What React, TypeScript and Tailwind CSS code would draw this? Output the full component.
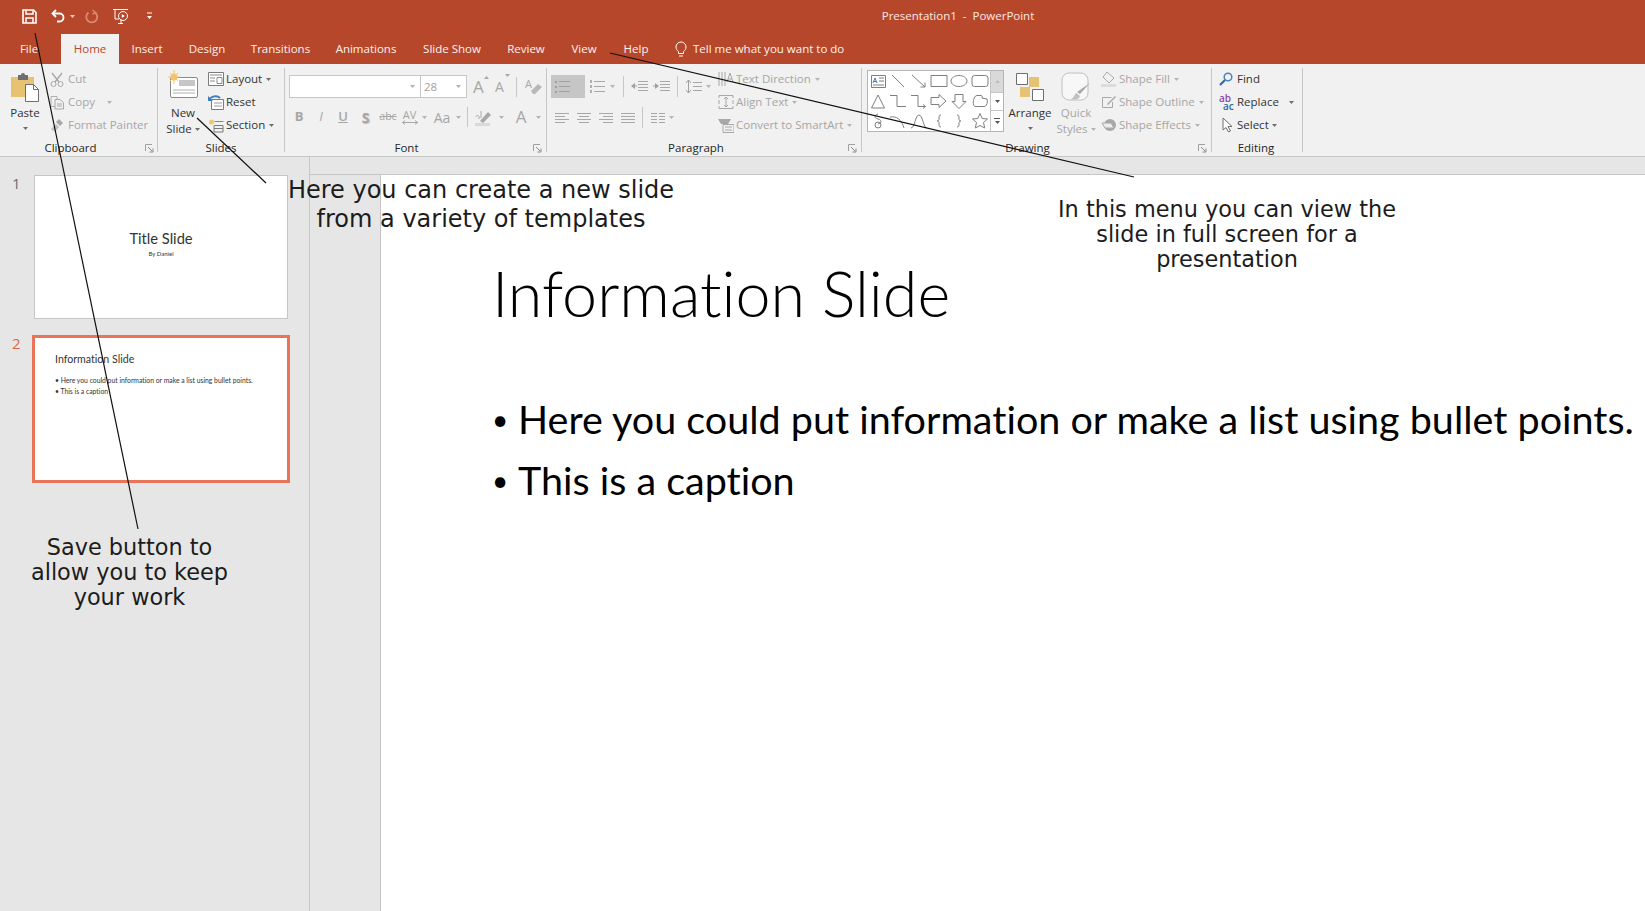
import React from "react";

const UI = "font-['Open_Sans','Noto_Sans',sans-serif]";

function Caret({ c = "#7a7a7a", className = "" }: { c?: string; className?: string }) {
  return (
    <svg width="5" height="3" viewBox="0 0 5 3" className={"shrink-0 " + className}>
      <path d="M0 0h5L2.500 3z" fill={c} />
    </svg>
  );
}

function Sep({ className = "" }: { className?: string }) {
  return <div className={"w-px bg-[#c6c6c6] shrink-0 " + className} />;
}

function Launcher({ className = "" }: { className?: string }) {
  return (
    <svg width="9" height="9" viewBox="0 0 9 9" fill="none" className={"absolute top-[4px] " + className}>
      <path d="M.5 7V.5H7" stroke="#a0a0a0" />
      <path d="M3 3l4 4M8 4.500V8H4.500" stroke="#8a8a8a" />
    </svg>
  );
}

function Group({ label, className, labelClass = "justify-center", children, launcher }: any) {
  return (
    <div className={"shrink-0 flex flex-col relative " + className}>
      <div className="h-[72px] flex">{children}</div>
      <div className={"h-[16px] flex text-[11.5px] leading-[16px] text-[#262626] relative " + labelClass}>
        {label}
        {launcher}
      </div>
    </div>
  );
}

function Row({ icon, label, caret, dim, caretClass = "ml-[4px]" }: any) {
  return (
    <div className={"h-[22px] mb-px flex items-center text-[11.5px] whitespace-nowrap " + (dim ? "text-[#a6a6a6]" : "text-[#333333]")}>
      <div className="w-[18px] h-[18px] shrink-0 flex items-center">{icon}</div>
      <span>{label}</span>
      {caret && <Caret c={dim ? "#b5b5b5" : "#6e6e6e"} className={caretClass} />}
    </div>
  );
}

function Big({ icon, lines, caret, dim, className = "" }: any) {
  return (
    <div className={"flex flex-col items-center text-[11.5px] leading-[16px] shrink-0 " + (dim ? "text-[#a6a6a6] " : "text-[#333333] ") + className}>
      <div className="h-[37px] flex items-center justify-center">{icon}</div>
      {lines.map((l: string, i: number) => (
        <div key={i} className="h-[16px] flex items-center gap-[3px] whitespace-nowrap">
          {l}
          {caret === "inline" && i === lines.length - 1 && <Caret c={dim ? "#b5b5b5" : "#6e6e6e"} />}
        </div>
      ))}
      {caret === "below" && (
        <div className="h-[14px] flex items-center">
          <Caret c="#6e6e6e" />
        </div>
      )}
    </div>
  );
}

function Lines({ x = 0, w = 14, ys, c = "#a8a8a8" }: { x?: number; w?: number; ys: number[]; c?: string }) {
  return <>{ys.map((y) => <path key={y} d={`M${x} ${y + 0.5}h${w}`} stroke={c} />)}</>;
}

function Ic({ w = 16, h = 16, children, className = "" }: any) {
  return (
    <svg width={w} height={h} viewBox={`0 0 ${w} ${h}`} fill="none" className={"shrink-0 " + className}>
      {children}
    </svg>
  );
}

const Shape = ({ d }: { d: string }) => (
  <div className="w-[20px] h-[20px] flex items-center justify-center">
    <svg width="18" height="18" viewBox="0 0 18 18" fill="none">
      <path d={d} stroke="#7f7f7f" />
    </svg>
  </div>
);

const shapes = [
  "",
  "M3 3l12 12",
  "M2 3l13 12M15 10.500v4.500h-4.500",
  "M1 3.500h16v11H1z",
  "M9 3.500c4.500 0 8 2.500 8 5.500s-3.500 5.500-8 5.500S1 12 1 9s3.500-5.500 8-5.500z",
  "M3.500 3.500h11a2.500 2.500 0 0 1 2.500 2.500v6a2.500 2.500 0 0 1-2.500 2.500h-11A2.500 2.500 0 0 1 1 12V6a2.500 2.500 0 0 1 2.500-2.500z",
  "M9 3L2.500 16h13z",
  "M1 3.500h7v11h9",
  "M1 3.500h7v11h7M13 12.500l2.500 2-2.500 2",
  "M1 5.500h8v-3l7 6.500-7 6.500v-3H1z",
  "M5 2.500h8v7h3L9 16.500 2 9.500h3z",
  "M6 3.500h4c1 0 1.500 1 1 2.500l5 1c1 3 0 6-2 7.500H4c-2-1-2-4-1.500-6C3 6 4 3.500 6 3.500z",
  "M9 2C5 3 5 6 9 7s4 4 0 5M6 13a3 3 0 1 0 6 0 3 3 0 1 0-6 0",
  "M1 5c7-1 11 2 14 11",
  "M1 16c4 0 4-13 8-13s4 13 8 13",
  "M11 3C9 3 9 4 9 6v1.500C9 8.500 8 9 7 9c1 0 2 .500 2 1.500V12c0 2 0 3 2 3",
  "M7 3c2 0 2 1 2 3v1.500c0 1 1 1.500 2 1.500-1 0-2 .500-2 1.500V12c0 2 0 3-2 3",
  "M9 1.500l2.200 5 5.300.5-4 3.500 1.200 5.500L9 13.500 4.300 16l1.200-5.500-4-3.500 5.300-.5z",
];

export default function App() {
  return (
    <div className={"relative w-full h-screen overflow-hidden flex flex-col bg-white " + UI}>
      {/* title bar */}
      <div className="h-[32px] shrink-0 bg-[#b7472a] relative flex items-center text-white">
        <div className="flex items-center pl-[22px]">
          <Ic w={15} h={15}>
            <path d="M1 1h10.500L14 3.500V14H1z" stroke="#fff" strokeWidth="1.600" />
            <path d="M4 1.500v3.500h7V1.500M4 14V9h7v5" stroke="#fff" strokeWidth="1.500" />
          </Ic>
          <Ic w={15} h={14} className="ml-[14px]">
            <path d="M5 1L1.500 4.500 5 8" stroke="#fff" strokeWidth="1.800" />
            <path d="M2 4.500h6.500a4 4 0 0 1 0 8H6" stroke="#fff" strokeWidth="1.800" />
          </Ic>
          <Caret c="#f0d0c6" className="ml-[4px]" />
          <Ic w={15} h={15} className="ml-[9px]">
            <path d="M11 3.500a5.500 5.500 0 1 1-6.500 0" stroke="#d98a74" strokeWidth="1.800" />
            <path d="M8.500 1l3 2.500-3 1.500" stroke="#d98a74" strokeWidth="1.500" />
          </Ic>
          <Ic w={18} h={18} className="ml-[13px]">
            <path d="M1 2.500h15M3 2.500V12h4M9 12v4M6 16.500h5" stroke="#fff" />
            <circle cx="11" cy="9" r="4.500" stroke="#fff" />
            <path d="M9.800 7v4l3-2z" fill="#fff" />
          </Ic>
          <Ic w={7} h={8} className="ml-[16px]">
            <path d="M1 1h5" stroke="#fff" />
            <path d="M1 4h5L3.500 7z" fill="#fff" />
          </Ic>
        </div>
        <div className="absolute left-0 right-0 text-center text-[11.500px] whitespace-pre text-[#fbeae5] pl-[271px]">Presentation1  -  PowerPoint</div>
      </div>

      {/* tabs */}
      <div className="h-[32px] shrink-0 bg-[#b7472a] flex items-end text-[11.5px] text-[#fdf3ef]">
        <div className="w-[61px] h-[30px] flex items-center justify-center pr-[3px]">File</div>
        <div className="w-[58px] h-[30px] bg-[#f1f1f1] flex items-center justify-center text-[#b7472a]">Home</div>
        <div className="w-[56px] h-[30px] flex items-center justify-center">Insert</div>
        <div className="w-[64px] h-[30px] flex items-center justify-center">Design</div>
        <div className="w-[83px] h-[30px] flex items-center justify-center">Transitions</div>
        <div className="w-[88px] h-[30px] flex items-center justify-center">Animations</div>
        <div className="w-[84px] h-[30px] flex items-center justify-center">Slide Show</div>
        <div className="w-[64px] h-[30px] flex items-center justify-center">Review</div>
        <div className="w-[52px] h-[30px] flex items-center justify-center">View</div>
        <div className="w-[52px] h-[30px] flex items-center justify-center">Help</div>
        <div className="h-[30px] flex items-center ml-[12px]">
          <Ic w={14} h={16} className="mr-[5px]">
            <path d="M4.500 10.500C3 9.500 2 8 2 6a5 5 0 0 1 10 0c0 2-1 3.500-2.500 4.500v2h-5zM5 15h4" stroke="#fff" />
          </Ic>
          Tell me what you want to do
        </div>
      </div>

      {/* ribbon */}
      <div className="h-[93px] shrink-0 bg-[#f1f1f1] border-b border-[#c6c6c6] pt-[4px] flex items-start">
        <Group label="Clipboard" className="w-[157px]" labelClass="justify-center pr-[16px]" launcher={<Launcher className="left-[145px]" />}>
          <Big
            className="w-[34px] ml-[8px]"
            lines={["Paste"]}
            caret="below"
            icon={
              <Ic w={30} h={30}>
                <path d="M1 5h23v20H1z" fill="#e8c273" />
                <path d="M8 3h3a2 2 0 0 1 4 0h3v5H8z" fill="#6e6e6e" />
                <path d="M15.500 12.500h8l5 5v12h-13z" fill="#fff" stroke="#6e6e6e" />
                <path d="M23.500 12.500v5h5" stroke="#6e6e6e" />
              </Ic>
            }
          />
          <div className="ml-[8px] flex flex-col">
            <Row dim label="Cut" icon={<Ic w={14} h={15}><path d="M2 1l7 9M12 1L5 10" stroke="#a8a8a8" strokeWidth="1.400" /><circle cx="3.500" cy="12" r="2.500" stroke="#a8a8a8" /><circle cx="10.500" cy="12" r="2.500" stroke="#a8a8a8" /></Ic>} />
            <Row dim label="Copy" caret caretClass="ml-[12px]" icon={<Ic w={15} h={15}><path d="M1 1.500h6v10H1z" stroke="#b0b0b0" /><path d="M5 4.500h5l3.500 3v6.500H5z" fill="#f1f1f1" stroke="#a8a8a8" /><path d="M7 9h5M7 11h5" stroke="#a8a8a8" /></Ic>} />
            <Row dim label="Format Painter" icon={<Ic w={15} h={15}><path d="M9 1l4 4-3 3-4-4z" fill="#a8a8a8" /><path d="M6 6l3 3-4 5-4-3z" fill="#c0c0c0" /></Ic>} />
          </div>
        </Group>
        <Sep className="h-[84px]" />
        <Group label="Slides" className="w-[126px]" labelClass="justify-center">
          <Big
            className="w-[45px] pl-[5px]"
            lines={["New", "Slide"]}
            caret="inline"
            icon={
              <Ic w={31} h={29} className="-mt-[5px]">
                <rect x="2.500" y="7.500" width="27" height="20" rx="1.500" fill="#fff" stroke="#8a8a8a" />
                <path d="M11 10h16v6H11z" fill="#c6c6c6" />
                <path d="M5 20h22M5 23h22" stroke="#b0b0b0" />
                <circle cx="6" cy="7" r="3.500" fill="#f2c46c" />
                <path d="M6 0v14M0 7h12M2 3l8 8M10 3l-8 8" stroke="#f2c46c" />
              </Ic>
            }
          />
          <div className="ml-[5px] flex flex-col">
            <Row label="Layout" caret icon={<Ic w={16} h={14}><path d="M.5.500h15v13H.5z" fill="#fff" stroke="#7a7a7a" /><path d="M2 3h12M2 6h5M2 9h5M9 5.500h5v6H9z" stroke="#8a8a8a" /></Ic>} />
            <Row label="Reset" icon={<Ic w={16} h={15}><path d="M3.500 4.500h12v10h-12z" fill="#fff" stroke="#7a7a7a" /><path d="M6 8h8M6 11h8" stroke="#9a9a9a" /><path d="M1 5C3 1 9 0 12 3" stroke="#3f7cb8" strokeWidth="1.800" /><path d="M0 1v5h5z" fill="#3f7cb8" /></Ic>} />
            <Row label="Section" caret icon={<Ic w={16} h={15}><circle cx="3.500" cy="4" r="2.500" fill="#f2c46c" /><path d="M6.500 3.500h9" stroke="#d9663f" /><path d="M6 7.500h9v6.500H6zM6 10.500h9" stroke="#7a7a7a" /></Ic>} />
          </div>
        </Group>
        <Sep className="h-[84px]" />
        <Group label="Font" className="w-[261px]" labelClass="justify-center pr-[18px]" launcher={<Launcher className="left-[248px]" />}>
          <div className="flex flex-col pt-[7px] text-[#a6a6a6]">
            <div className="flex items-center h-[23px] ml-[4px]">
              <div className="w-[132px] h-[23px] bg-white border border-[#c6c6c6] flex items-center justify-end pr-[5px]"><Caret c="#b0b0b0" /></div>
              <div className="w-[46px] h-[23px] bg-white border border-l-0 border-[#c6c6c6] flex items-center justify-between pl-[3px] pr-[5px] text-[11.500px] text-[#a0a0a0]">28<Caret c="#b0b0b0" /></div>
              <span className="ml-[6px] w-[16px] text-[17px] leading-none relative">A<span className="absolute -top-[2px] left-[11px]"><Caret c="#a8a8a8" className="rotate-180" /></span></span>
              <span className="ml-[6px] w-[18px] text-[14px] leading-none relative">A<span className="absolute -top-[6px] left-[10px]"><Caret c="#a8a8a8" /></span></span>
              <Sep className="h-[20px] ml-[3px]" />
              <div className="ml-[8px] w-[18px] h-[18px] relative text-[11px] leading-[11px]">A<Ic w={14} h={12} className="absolute left-[4px] top-[5px]"><path d="M2 8l7-7 4 3-7 7H4z" fill="#b8b8b8" /></Ic></div>
            </div>
            <div className="flex items-center h-[22px] mt-[8px] ml-[3px] text-[13px]">
              <span className="w-[22px] text-center font-bold">B</span>
              <span className="w-[22px] text-center italic">I</span>
              <span className="w-[22px] text-center underline font-semibold">U</span>
              <span className="w-[23px] text-center font-bold text-[14px] [text-shadow:1px_1px_1px_#c0c0c0]">S</span>
              <span className="w-[22px] text-center text-[10.5px] line-through">abc</span>
              <span className="w-[21px] relative text-center text-[11px] leading-none -mt-[5px]">AV<Ic w={16} h={5} className="absolute left-[3px] top-[11px]"><path d="M0 2.500h16M3 .500L.500 2.500 3 4.500M13 .500l2.500 2-2.500 2" stroke="#a8a8a8" /></Ic></span>
              <Caret c="#b5b5b5" className="ml-[2px]" />
              <span className="w-[24px] ml-[3px] text-center text-[14px]">Aa</span>
              <Caret c="#b5b5b5" className="ml-[2px]" />
              <Sep className="h-[20px] ml-[6px]" />
              <Ic w={18} h={17} className="ml-[7px]"><path d="M0 14h15v3H0z" fill="#d9d9d9" /><path d="M5 12l8-9 3 3-8 8z" fill="#a8a8a8" /><path d="M1 8c0-2 3-2 3 0v2M6 2v7" stroke="#a8a8a8" /></Ic>
              <Caret c="#b5b5b5" className="ml-[6px]" />
              <span className="ml-[8px] w-[18px] text-center text-[17px]">A</span>
              <Caret c="#b5b5b5" className="ml-[6px]" />
            </div>
          </div>
        </Group>
        <Sep className="h-[84px]" />
        <Group label="Paragraph" className="w-[314px]" labelClass="justify-center pr-[16px]" launcher={<Launcher className="left-[301px]" />}>
          <div className="w-[171px] shrink-0 flex flex-col pt-[7px]">
            <div className="flex items-center h-[23px] ml-[4px]">
              <div className="w-[34px] h-[23px] bg-[#c6c6c6] flex items-center pl-[4px]"><Ic w={16} h={14}><path d="M0 1h2v2H0zM0 6h2v2H0zM0 11h2v2H0z" fill="#a0a0a0" /><Lines x={4} w={11} ys={[1, 6, 11]} c="#a0a0a0" /></Ic></div>
              <Ic w={15} h={14} className="ml-[5px]"><path d="M0 0h2v3H0zM0 5h2v3H0zM0 10h2v3H0z" fill="#b0b0b0" /><Lines x={4} w={11} ys={[1, 6, 11]} /></Ic>
              <Caret c="#b5b5b5" className="ml-[5px]" />
              <Sep className="h-[21px] ml-[8px]" />
              <Ic w={17} h={13} className="ml-[7px]"><Lines x={7} w={10} ys={[1, 4, 7, 10]} /><path d="M0 6l4-3v6z" fill="#a0a0a0" /><path d="M3 6h3" stroke="#a0a0a0" /></Ic>
              <Ic w={17} h={13} className="ml-[5px]"><Lines x={7} w={10} ys={[1, 4, 7, 10]} /><path d="M6 6L2 3v6z" fill="#a0a0a0" /><path d="M0 6h3" stroke="#a0a0a0" /></Ic>
              <Sep className="h-[21px] ml-[7px]" />
              <Ic w={17} h={16} className="ml-[7px]"><Lines x={8} w={9} ys={[3, 7, 11]} /><path d="M3.500 1v13M1 4l2.500-3L6 4M1 11l2.500 3L6 11" stroke="#a0a0a0" /></Ic>
              <Caret c="#b5b5b5" className="ml-[4px]" />
            </div>
            <div className="flex items-center h-[22px] mt-[8px] ml-[8px]">
              <Ic w={14} h={11}><Lines ys={[1, 7]} /><Lines w={10} ys={[4, 10]} /></Ic>
              <Ic w={14} h={11} className="ml-[8px]"><Lines ys={[1, 7]} /><Lines x={2} w={10} ys={[4, 10]} /></Ic>
              <Ic w={14} h={11} className="ml-[8px]"><Lines ys={[1, 7]} /><Lines x={4} w={10} ys={[4, 10]} /></Ic>
              <Ic w={14} h={11} className="ml-[8px]"><Lines ys={[1, 4, 7, 10]} /></Ic>
              <Sep className="h-[21px] ml-[7px]" />
              <Ic w={14} h={11} className="ml-[8px]"><Lines w={6} ys={[1, 4, 7, 10]} /><Lines x={8} w={6} ys={[1, 4, 7, 10]} /></Ic>
              <Caret c="#b5b5b5" className="ml-[4px]" />
            </div>
          </div>
          <div className="flex flex-col">
            <Row dim label="Text Direction" caret icon={<Ic w={16} h={16}><path d="M1 1v14M4 1v14M7 1v14" stroke="#a8a8a8" /><path d="M9 11l3-9 3 9M10 8h4" stroke="#a8a8a8" /></Ic>} />
            <Row dim label="Align Text" caret icon={<Ic w={16} h={16}><path d="M1 4V1.500h14V4M1 12v2.500h14V12M1 6v4M15 6v4" stroke="#a8a8a8" /><path d="M8 3v10M6 5l2-2 2 2M6 11l2 2 2-2" stroke="#a8a8a8" /></Ic>} />
            <Row dim label="Convert to SmartArt" caret icon={<Ic w={16} h={16}><path d="M0 2h13l-3 5H3z" fill="#a8a8a8" /><path d="M5 7.500h11v8H5z" fill="#f1f1f1" stroke="#a8a8a8" /><path d="M7 10h7M7 13h7" stroke="#a8a8a8" /></Ic>} />
          </div>
        </Group>
        <Sep className="h-[84px]" />
        <Group label="Drawing" className="w-[349px]" labelClass="justify-center pr-[18px]" launcher={<Launcher className="left-[336px]" />}>
          <div className="ml-[5px] mt-[2px] w-[137px] h-[62px] shrink-0 bg-white border border-[#b5b5b5] flex">
            <div className="w-[122px] grid grid-cols-6 content-start">
              <div className="w-[20px] h-[20px] flex items-center justify-center">
                <Ic w={15} h={13}>
                  <path d="M.5.500h14v12H.5z" stroke="#7f7f7f" />
                  <path d="M2 8l2-5 2 5M3 6.500h2" stroke="#3f7cb8" />
                  <path d="M8 3h5M8 6h5M2 10h11" stroke="#7f7f7f" />
                </Ic>
              </div>
              {shapes.slice(1).map((d, i) => <Shape key={i} d={d} />)}
            </div>
            <div className="w-[13px] border-l border-[#c6c6c6] flex flex-col">
              <div className="h-[21px] bg-[#d9d9d9] flex items-center justify-center"><Caret c="#bdbdbd" className="rotate-180" /></div>
              <div className="h-[19px] border-y border-[#c6c6c6] flex items-center justify-center"><Caret c="#555555" /></div>
              <div className="h-[20px] flex flex-col items-center justify-center gap-[2px]"><div className="w-[6px] h-px bg-[#555555]" /><Caret c="#555555" /></div>
            </div>
          </div>
          <Big
            className="w-[50px] ml-[1px]"
            lines={["Arrange"]}
            caret="below"
            icon={
              <Ic w={28} h={28} className="mt-[1px]">
                <path d="M13 4h10v10H13zM4 14h10v10H4z" fill="#e8c273" />
                <path d="M.5.500h11v11H.5z" fill="#fff" stroke="#6e6e6e" />
                <path d="M16.500 16.500h11v11h-11z" fill="#fff" stroke="#6e6e6e" />
              </Ic>
            }
          />
          <Big
            dim
            className="w-[42px]"
            lines={["Quick", "Styles"]}
            caret="inline"
            icon={
              <Ic w={30} h={30} className="mt-[1px]">
                <rect x="1" y="1" width="26" height="27" rx="7" fill="#f7f7f7" stroke="#c0c0c0" />
                <path d="M29 11L19 22l-3-2z" fill="#a8a8a8" />
                <path d="M15 21l4 3c-1 4-6 4-9 3 3-1 3-4 5-6z" fill="#c0c0c0" />
              </Ic>
            }
          />
          <div className="ml-[4px] flex flex-col">
            <Row dim label="Shape Fill" caret icon={<Ic w={16} h={16}><path d="M6 1l7 6-5 5-6-6z" stroke="#a8a8a8" /><path d="M0 13h15v3H0z" fill="#dcdcdc" /></Ic>} />
            <Row dim label="Shape Outline" caret icon={<Ic w={16} h={16}><path d="M1.500 3.500h9M1.500 3.500v10h10V8" stroke="#a8a8a8" /><path d="M6 10l8-8 1 1-8 8z" fill="#a8a8a8" /></Ic>} />
            <Row dim label="Shape Effects" caret icon={<Ic w={16} h={16}><circle cx="9" cy="8" r="6" fill="#a8a8a8" /><path d="M1 6h9l3 5H4z" fill="#eeeeee" stroke="#a8a8a8" /></Ic>} />
          </div>
        </Group>
        <Sep className="h-[84px]" />
        <Group label="Editing" className="w-[90px]" labelClass="justify-center pr-[2px]">
          <div className="ml-[7px] flex flex-col">
            <Row label="Find" icon={<Ic w={14} h={14}><circle cx="9" cy="5" r="3.800" stroke="#4d82b8" strokeWidth="1.500" /><path d="M6 8l-5 5" stroke="#2f6aa5" strokeWidth="2.200" /></Ic>} />
            <Row label="Replace" caret caretClass="ml-[10px]" icon={<div className="w-[17px] flex flex-col text-[10px] leading-[8px] font-semibold"><span className="text-[#8e44ad]">ab</span><span className="text-[#2f6aa5] pl-[4px]">ac</span></div>} />
            <Row label="Select" caret caretClass="ml-[3px]" icon={<Ic w={14} h={16} className="ml-[2px]"><path d="M2 1v12l3-2.500L7.500 15 9.500 14 7 9.500h4z" fill="#fff" stroke="#6e6e6e" /></Ic>} />
          </div>
        </Group>
        <Sep className="h-[84px]" />
      </div>

      {/* main */}
      <div className="flex-1 min-h-0 flex">
        <div className="w-[310px] shrink-0 bg-[#e6e6e6] border-r border-[#c6c6c6] pt-[18px] flex flex-col">
          <div className="flex">
            <div className="w-[34px] pl-[12px] text-[15px] leading-[16px] text-[#6e6e6e]">1</div>
            <div className="w-[254px] h-[144px] bg-white border border-[#c6c6c6] flex flex-col items-center pt-[52px] font-['Lato',sans-serif] text-[#333333] [font-variant-ligatures:none]">
              <div className="text-[14.7px] leading-[20px]">Title Slide</div>
              <div className="text-[6px] leading-[8px] mt-[2px]">By Daniel</div>
            </div>
          </div>
          <div className="flex mt-[16px]">
            <div className="w-[32px] pl-[12px] text-[15px] leading-[16px] text-[#d9664a]">2</div>
            <div className="w-[258px] h-[148px] bg-white border-[3px] border-[#e97458] pt-[14px] pl-[20px] font-['Lato',sans-serif] text-[#333333] [font-variant-ligatures:none]">
              <div className="text-[10.6px] leading-[14px]">Information Slide</div>
              <div className="text-[6.8px] leading-[11px] mt-[9px] whitespace-nowrap">• Here you could put information or make a list using bullet points.</div>
              <div className="text-[6.8px] leading-[11px]">• This is a caption</div>
            </div>
          </div>
        </div>
        <div className="flex-1 min-w-0 flex flex-col">
          <div className="h-[18px] shrink-0 bg-[#e6e6e6] border-b border-[#c6c6c6]" />
          <div className="flex-1 flex">
            <div className="w-[71px] shrink-0 bg-[#e6e6e6] border-r border-[#c6c6c6]" />
            <div className="flex-1 min-w-0 bg-white pl-[111px] pt-[82px] font-['Lato',sans-serif] text-black overflow-hidden [font-variant-ligatures:none]">
              <div className="text-[62.8px] leading-[72px] font-light whitespace-nowrap">Information Slide</div>
              <div className="mt-[68px] text-[39.5px] leading-[44px] whitespace-nowrap flex">
                <span className="w-[26px] shrink-0 text-[28px]">•</span>Here you could put information or make a list using bullet points.
              </div>
              <div className="mt-[17px] text-[39.5px] leading-[44px] whitespace-nowrap flex">
                <span className="w-[26px] shrink-0 text-[28px]">•</span>This is a caption
              </div>
            </div>
          </div>
        </div>
      </div>

      {/* annotations */}
      <svg className="absolute inset-0 pointer-events-none" width="1645" height="911">
        <path d="M35 33L138 529" stroke="#111" strokeWidth="1.200" />
        <path d="M197 118L266 183" stroke="#111" strokeWidth="1.200" />
        <path d="M610 53L1134 177" stroke="#111" strokeWidth="1.200" />
      </svg>
      <div className="absolute left-[265px] top-[176px] w-[432px] text-center font-['DejaVu_Sans',sans-serif] text-[24px] leading-[29px] text-[#1c1c1c]">
        Here you can create a new slide<br />from a variety of templates
      </div>
      <div className="absolute left-[1027px] top-[197px] w-[400px] text-center font-['DejaVu_Sans',sans-serif] text-[22.4px] leading-[25px] text-[#1c1c1c]">
        In this menu you can view the<br />slide in full screen for a<br />presentation
      </div>
      <div className="absolute left-[0px] top-[535px] w-[259px] text-center font-['DejaVu_Sans',sans-serif] text-[22.4px] leading-[25px] text-[#1c1c1c]">
        Save button to<br />allow you to keep<br />your work
      </div>
    </div>
  );
}
